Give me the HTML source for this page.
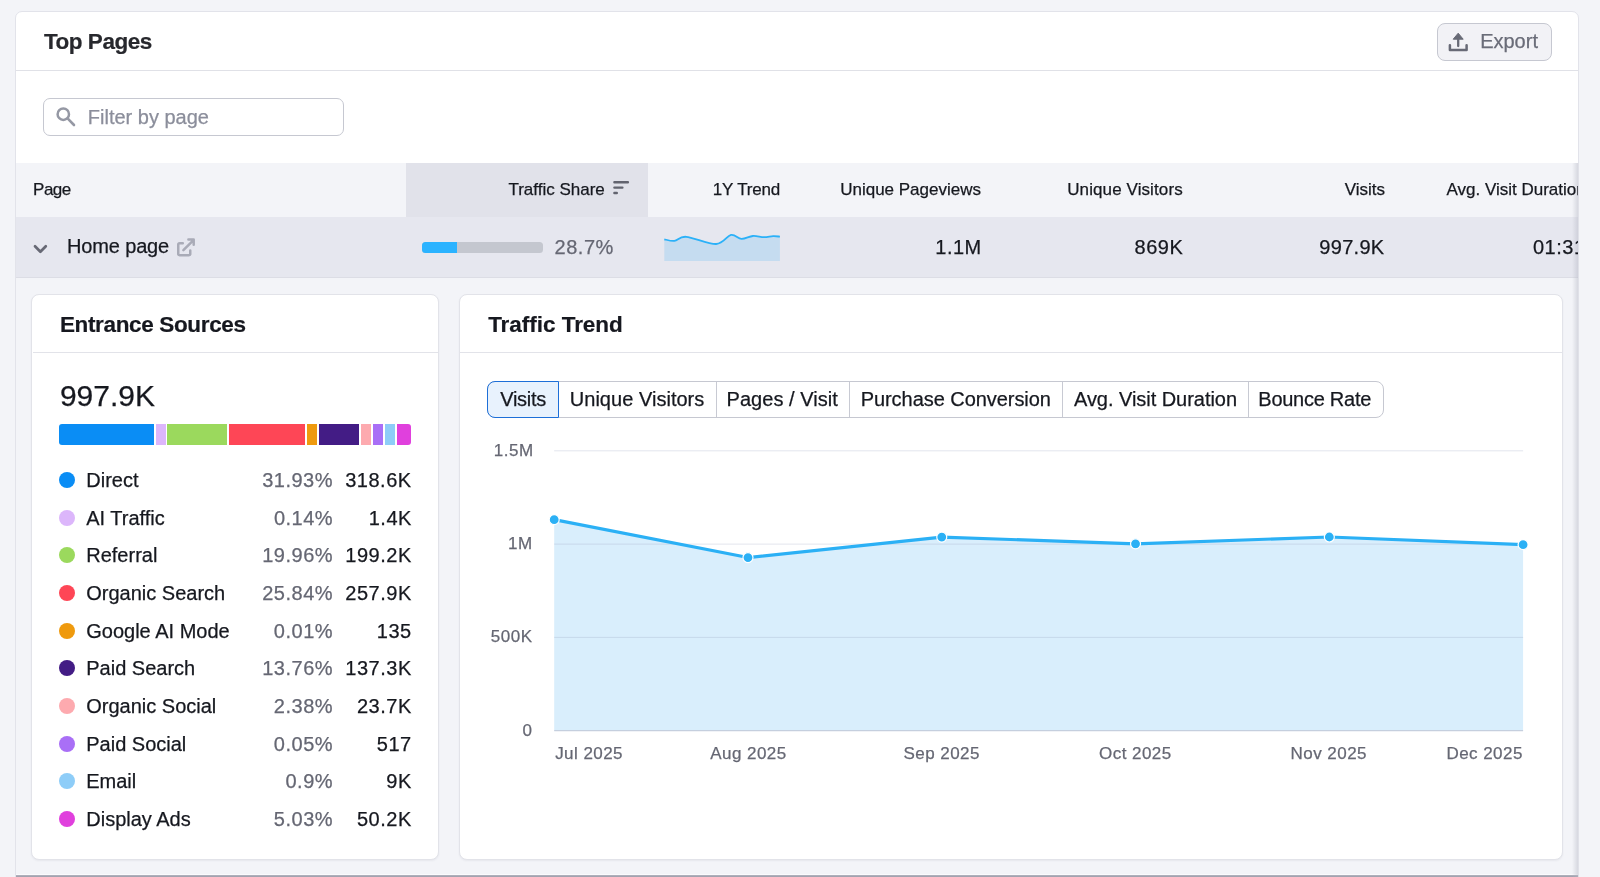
<!DOCTYPE html>
<html><head><meta charset="utf-8"><style>
html,body{margin:0;padding:0}
body{width:1600px;height:877px;overflow:hidden;position:relative;background:#f3f4f8;font-family:"Liberation Sans",sans-serif}
.abs{position:absolute}
</style></head><body>
<!-- outer card -->
<div class="abs" style="left:15px;top:11px;width:1564px;height:900px;box-sizing:border-box;background:#fff;border:1px solid #e2e3ea;border-radius:7px"></div>
<div class="abs" style="left:16px;top:70px;width:1562px;height:1px;background:#e0e1e7"></div>
<!-- export button -->
<div class="abs" style="left:1437px;top:23px;width:114.5px;height:37.5px;box-sizing:border-box;border:1px solid #c6c8d1;border-radius:8px;background:#f2f2f6"></div>
<svg class="abs" style="left:0;top:0" width="1600" height="100">
<path d="M1458.2,33.2 L1463.2,39.2 L1453.2,39.2 Z" fill="#686a76" stroke="#686a76" stroke-width="1" stroke-linejoin="round"/>
<path d="M1458.2,38.5 V46" fill="none" stroke="#686a76" stroke-width="2.3" stroke-linecap="round"/>
<path d="M1449.9,45.3 V50 H1466.6 V45.3" fill="none" stroke="#686a76" stroke-width="2.5" stroke-linecap="round" stroke-linejoin="round"/>
</svg>
<!-- filter input -->
<div class="abs" style="left:43px;top:98px;width:301px;height:38px;box-sizing:border-box;border:1px solid #c6c8d1;border-radius:7px;background:#fff"></div>
<svg class="abs" style="left:0;top:0" width="400" height="200">
<circle cx="63.3" cy="114.2" r="5.7" fill="none" stroke="#9598a4" stroke-width="2.5"/>
<path d="M67.8,118.7 L74,125" stroke="#9598a4" stroke-width="2.6" stroke-linecap="round"/>
</svg>
<!-- table header -->
<div class="abs" style="left:16px;top:163px;width:1562px;height:54px;background:#f3f4f8"></div>
<div class="abs" style="left:406px;top:163px;width:242px;height:54px;background:#e1e2ea"></div>
<svg class="abs" style="left:0;top:0" width="800" height="220">
<path d="M614.4,182.3 H627.9 M614.4,187.6 H622.4 M614.4,193 H616.8" stroke="#62646f" stroke-width="2.4" stroke-linecap="round"/>
</svg>
<!-- data row -->
<div class="abs" style="left:16px;top:217px;width:1562px;height:61px;background:#e6e7ef"></div>
<div class="abs" style="left:16px;top:277px;width:1562px;height:1px;background:#dcdde5"></div>
<svg class="abs" style="left:0;top:0" width="800" height="300">
<path d="M35,246.2 L40.4,251.7 L45.8,246.2" fill="none" stroke="#676975" stroke-width="2.7" stroke-linecap="round" stroke-linejoin="round"/>
<path d="M182.8,243.3 H179.6 Q178.25,243.3 178.25,244.6 V253.9 Q178.25,255.2 179.6,255.2 H188.9 Q190.25,255.2 190.25,253.9 V250.6" fill="none" stroke="#a9abb7" stroke-width="2.5" stroke-linecap="round"/>
<path d="M183.4,250.2 L193,240.6 M188.4,239.5 H193.7 V244.8" fill="none" stroke="#a9abb7" stroke-width="2.5" stroke-linecap="round" stroke-linejoin="round"/>
</svg>
<div class="abs" style="left:422px;top:242px;width:121px;height:11px;border-radius:3.5px;background:#c4c7cf;overflow:hidden"><div style="width:35.3px;height:11px;background:#2bb3ff"></div></div>
<svg style="position:absolute;left:0;top:0" width="1600" height="877">
<path d="M664.30,239.30 C665.98,239.57 670.75,241.32 674.40,240.90 C678.05,240.48 679.23,236.28 686.20,236.80 C693.17,237.32 708.73,244.32 716.20,244.00 C723.67,243.68 726.78,235.75 731.00,234.90 C735.22,234.05 737.85,238.72 741.50,238.90 C745.15,239.08 749.17,236.28 752.90,236.00 C756.63,235.72 760.53,237.17 763.90,237.20 C767.27,237.23 770.43,236.30 773.10,236.20 C775.77,236.10 778.77,236.53 779.90,236.60 L779.9,260.9 L664.3,260.9 Z" fill="#c5dcf0"/>
<path d="M664.30,239.30 C665.98,239.57 670.75,241.32 674.40,240.90 C678.05,240.48 679.23,236.28 686.20,236.80 C693.17,237.32 708.73,244.32 716.20,244.00 C723.67,243.68 726.78,235.75 731.00,234.90 C735.22,234.05 737.85,238.72 741.50,238.90 C745.15,239.08 749.17,236.28 752.90,236.00 C756.63,235.72 760.53,237.17 763.90,237.20 C767.27,237.23 770.43,236.30 773.10,236.20 C775.77,236.10 778.77,236.53 779.90,236.60" fill="none" stroke="#2bb1f8" stroke-width="1.8"/>
</svg>
<!-- expanded area -->
<div class="abs" style="left:16px;top:278px;width:1562px;height:596px;background:#f3f4f8"></div>
<div class="abs" style="left:16px;top:874px;width:1562px;height:1px;background:#fbfbfd"></div>
<div class="abs" style="left:16px;top:875px;width:1562px;height:2px;background:linear-gradient(#b4b5c0,#9c9daa)"></div>
<!-- entrance sources card -->
<div class="abs" style="left:31px;top:294px;width:407.5px;height:565.5px;box-sizing:border-box;background:#fff;border:1px solid #e2e3e9;border-radius:8px;box-shadow:0 1px 2px rgba(30,30,60,0.06)"></div>
<div class="abs" style="left:32.5px;top:352px;width:405px;height:1px;background:#e2e3e9"></div>
<!-- traffic trend card -->
<div class="abs" style="left:459px;top:294px;width:1104px;height:565.5px;box-sizing:border-box;background:#fff;border:1px solid #e2e3e9;border-radius:8px;box-shadow:0 1px 2px rgba(30,30,60,0.06)"></div>
<div class="abs" style="left:460px;top:352px;width:1102px;height:1px;background:#e2e3e9"></div>
<!-- tabs -->
<div class="abs" style="left:486.5px;top:381px;width:897px;height:37px;box-sizing:border-box;border:1px solid #c6c8d1;border-radius:8px;background:#fff"></div>
<div class="abs" style="left:715.5px;top:382px;width:1px;height:35px;background:#c8cad3"></div>
<div class="abs" style="left:849px;top:382px;width:1px;height:35px;background:#c8cad3"></div>
<div class="abs" style="left:1061.5px;top:382px;width:1px;height:35px;background:#c8cad3"></div>
<div class="abs" style="left:1247.5px;top:382px;width:1px;height:35px;background:#c8cad3"></div>
<div class="abs" style="left:486.5px;top:381px;width:72px;height:37px;box-sizing:border-box;border:1.6px solid #1d6fd8;border-radius:8px 0 0 8px;background:#e8f2fd"></div>
<svg style="position:absolute;left:0;top:0" width="1600" height="877" viewBox="0 0 1600 877">
<path d="M554.20,730.70 L554.20,519.66 L747.98,557.54 L941.76,537.10 L1135.54,543.80 L1329.32,537.01 L1523.10,544.66 L1523.10,730.70 Z" fill="#d9eefc"/>
<line x1="554.2" x2="1523.1" y1="637.40" y2="637.40" stroke="rgba(150,160,190,0.28)" stroke-width="1"/><line x1="554.2" x2="1523.1" y1="544.10" y2="544.10" stroke="rgba(150,160,190,0.28)" stroke-width="1"/><line x1="554.2" x2="1523.1" y1="450.80" y2="450.80" stroke="rgba(150,160,190,0.28)" stroke-width="1"/>
<line x1="554.2" x2="1523.1" y1="730.7" y2="730.7" stroke="#c5cfde" stroke-width="1.2"/>
<path d="M554.20,519.66 L747.98,557.54 L941.76,537.10 L1135.54,543.80 L1329.32,537.01 L1523.10,544.66" fill="none" stroke="#2bb0f5" stroke-width="3.2" stroke-linejoin="round"/>
<circle cx="554.20" cy="519.66" r="5" fill="#2bb0f5" stroke="#fff" stroke-width="1.2"/><circle cx="747.98" cy="557.54" r="5" fill="#2bb0f5" stroke="#fff" stroke-width="1.2"/><circle cx="941.76" cy="537.10" r="5" fill="#2bb0f5" stroke="#fff" stroke-width="1.2"/><circle cx="1135.54" cy="543.80" r="5" fill="#2bb0f5" stroke="#fff" stroke-width="1.2"/><circle cx="1329.32" cy="537.01" r="5" fill="#2bb0f5" stroke="#fff" stroke-width="1.2"/><circle cx="1523.10" cy="544.66" r="5" fill="#2bb0f5" stroke="#fff" stroke-width="1.2"/>
</svg>
<div style="position:absolute;left:59.20px;top:424px;width:95.20px;height:21px;background:#0a8df5;border-radius:3px 0 0 3px;"></div><div style="position:absolute;left:156.10px;top:424px;width:9.80px;height:21px;background:#dcb6fb;"></div><div style="position:absolute;left:167.30px;top:424px;width:59.60px;height:21px;background:#9bd95d;"></div><div style="position:absolute;left:228.90px;top:424px;width:75.90px;height:21px;background:#fe4656;"></div><div style="position:absolute;left:306.80px;top:424px;width:10.30px;height:21px;background:#ef9a0e;"></div><div style="position:absolute;left:318.90px;top:424px;width:40.50px;height:21px;background:#431c85;"></div><div style="position:absolute;left:361.10px;top:424px;width:9.80px;height:21px;background:#fdaaaf;"></div><div style="position:absolute;left:372.60px;top:424px;width:10.40px;height:21px;background:#a96ff6;"></div><div style="position:absolute;left:384.70px;top:424px;width:10.30px;height:21px;background:#8ecdf8;"></div><div style="position:absolute;left:396.80px;top:424px;width:14.40px;height:21px;background:#e040dd;border-radius:0 3px 3px 0;"></div>
<div style="position:absolute;left:59px;top:472.00px;width:16px;height:16px;border-radius:50%;background:#0a8df5"></div><div style="position:absolute;left:59px;top:509.67px;width:16px;height:16px;border-radius:50%;background:#dcb6fb"></div><div style="position:absolute;left:59px;top:547.34px;width:16px;height:16px;border-radius:50%;background:#9bd95d"></div><div style="position:absolute;left:59px;top:585.01px;width:16px;height:16px;border-radius:50%;background:#fe4656"></div><div style="position:absolute;left:59px;top:622.68px;width:16px;height:16px;border-radius:50%;background:#ef9a0e"></div><div style="position:absolute;left:59px;top:660.35px;width:16px;height:16px;border-radius:50%;background:#431c85"></div><div style="position:absolute;left:59px;top:698.02px;width:16px;height:16px;border-radius:50%;background:#fdaaaf"></div><div style="position:absolute;left:59px;top:735.69px;width:16px;height:16px;border-radius:50%;background:#a96ff6"></div><div style="position:absolute;left:59px;top:773.36px;width:16px;height:16px;border-radius:50%;background:#8ecdf8"></div><div style="position:absolute;left:59px;top:811.03px;width:16px;height:16px;border-radius:50%;background:#e040dd"></div>
<!-- scroll shadow -->
<div class="abs" style="left:1572px;top:163px;width:6px;height:714px;background:linear-gradient(to right, rgba(180,182,195,0), rgba(180,182,195,0.45))"></div>
<div class="abs" style="left:1578px;top:163px;width:1px;height:714px;background:#e0e1e8"></div>
<div class="abs" style="left:0;top:0;width:1600px;height:877px;will-change:transform"><div id="t_top" style="left:43.90px;-webkit-text-stroke:0.2px currentColor;position:absolute;top:30.55px;font-size:22.5px;line-height:22.5px;font-weight:700;color:#27282d;white-space:nowrap;letter-spacing:-0.46px;">Top Pages</div><div id="t_export" style="left:1480.15px;-webkit-text-stroke:0.25px currentColor;position:absolute;top:31.07px;font-size:20px;line-height:20px;font-weight:400;color:#6a6c78;white-space:nowrap;">Export</div><div id="t_filter" style="left:87.80px;-webkit-text-stroke:0.25px currentColor;position:absolute;top:106.87px;font-size:20px;line-height:20px;font-weight:400;color:#8b8e9b;white-space:nowrap;">Filter by page</div><div id="h_page" style="left:33.05px;-webkit-text-stroke:0.25px currentColor;position:absolute;top:180.61px;font-size:17px;line-height:17px;font-weight:400;color:#16181f;white-space:nowrap;letter-spacing:-0.5px;">Page</div><div id="h_ts" style="right:995.25px;-webkit-text-stroke:0.25px currentColor;position:absolute;top:180.61px;font-size:17px;line-height:17px;font-weight:400;color:#16181f;white-space:nowrap;">Traffic Share</div><div id="h_trend" style="right:819.85px;-webkit-text-stroke:0.25px currentColor;position:absolute;top:180.61px;font-size:17px;line-height:17px;font-weight:400;color:#16181f;white-space:nowrap;letter-spacing:-0.17px;">1Y Trend</div><div id="h_upv" style="right:619.00px;-webkit-text-stroke:0.25px currentColor;position:absolute;top:180.61px;font-size:17px;line-height:17px;font-weight:400;color:#16181f;white-space:nowrap;">Unique Pageviews</div><div id="h_uv" style="right:417.25px;-webkit-text-stroke:0.25px currentColor;position:absolute;top:180.61px;font-size:17px;line-height:17px;font-weight:400;color:#16181f;white-space:nowrap;letter-spacing:0.1px;">Unique Visitors</div><div id="h_visits" style="right:215.00px;-webkit-text-stroke:0.25px currentColor;position:absolute;top:180.61px;font-size:17px;line-height:17px;font-weight:400;color:#16181f;white-space:nowrap;">Visits</div><div id="r_home" style="left:67.00px;-webkit-text-stroke:0.25px currentColor;position:absolute;top:236.07px;font-size:20px;line-height:20px;font-weight:400;color:#16181f;white-space:nowrap;letter-spacing:-0.15px;">Home page</div><div id="r_pct" style="left:554.60px;-webkit-text-stroke:0.25px currentColor;position:absolute;top:236.57px;font-size:20px;line-height:20px;font-weight:400;color:#656773;white-space:nowrap;letter-spacing:0.5px;">28.7%</div><div id="r_upv" style="right:618.25px;-webkit-text-stroke:0.25px currentColor;position:absolute;top:236.57px;font-size:20px;line-height:20px;font-weight:400;color:#16181f;white-space:nowrap;letter-spacing:0.5px;">1.1M</div><div id="r_uv" style="right:416.75px;-webkit-text-stroke:0.25px currentColor;position:absolute;top:236.57px;font-size:20px;line-height:20px;font-weight:400;color:#16181f;white-space:nowrap;letter-spacing:0.5px;">869K</div><div id="r_visits" style="right:215.50px;-webkit-text-stroke:0.25px currentColor;position:absolute;top:236.57px;font-size:20px;line-height:20px;font-weight:400;color:#16181f;white-space:nowrap;letter-spacing:0.3px;">997.9K</div><div id="t_es" style="left:59.90px;-webkit-text-stroke:0.2px currentColor;position:absolute;top:313.55px;font-size:22.5px;line-height:22.5px;font-weight:700;color:#16181f;white-space:nowrap;letter-spacing:-0.35px;">Entrance Sources</div><div id="t_tt" style="left:488.15px;-webkit-text-stroke:0.2px currentColor;position:absolute;top:313.55px;font-size:22.5px;line-height:22.5px;font-weight:700;color:#16181f;white-space:nowrap;letter-spacing:-0.03px;">Traffic Trend</div><div id="big" style="left:59.90px;-webkit-text-stroke:0.25px currentColor;position:absolute;top:381.10px;font-size:30px;line-height:30px;font-weight:400;color:#16181f;white-space:nowrap;">997.9K</div><div id="l_n0" style="left:86.25px;-webkit-text-stroke:0.25px currentColor;position:absolute;top:470.07px;font-size:20px;line-height:20px;font-weight:400;color:#16181f;white-space:nowrap;">Direct</div><div id="l_p0" style="right:1267.00px;-webkit-text-stroke:0.25px currentColor;position:absolute;top:470.07px;font-size:20px;line-height:20px;font-weight:400;color:#656773;white-space:nowrap;letter-spacing:0.5px;">31.93%</div><div id="l_v0" style="right:1188.40px;-webkit-text-stroke:0.25px currentColor;position:absolute;top:470.07px;font-size:20px;line-height:20px;font-weight:400;color:#16181f;white-space:nowrap;letter-spacing:0.5px;">318.6K</div><div id="l_n1" style="left:86.25px;-webkit-text-stroke:0.25px currentColor;position:absolute;top:507.74px;font-size:20px;line-height:20px;font-weight:400;color:#16181f;white-space:nowrap;">AI Traffic</div><div id="l_p1" style="right:1266.88px;-webkit-text-stroke:0.25px currentColor;position:absolute;top:507.74px;font-size:20px;line-height:20px;font-weight:400;color:#656773;white-space:nowrap;letter-spacing:0.5px;">0.14%</div><div id="l_v1" style="right:1188.15px;-webkit-text-stroke:0.25px currentColor;position:absolute;top:507.74px;font-size:20px;line-height:20px;font-weight:400;color:#16181f;white-space:nowrap;letter-spacing:0.5px;">1.4K</div><div id="l_n2" style="left:86.25px;-webkit-text-stroke:0.25px currentColor;position:absolute;top:545.41px;font-size:20px;line-height:20px;font-weight:400;color:#16181f;white-space:nowrap;">Referral</div><div id="l_p2" style="right:1266.94px;-webkit-text-stroke:0.25px currentColor;position:absolute;top:545.41px;font-size:20px;line-height:20px;font-weight:400;color:#656773;white-space:nowrap;letter-spacing:0.5px;">19.96%</div><div id="l_v2" style="right:1188.28px;-webkit-text-stroke:0.25px currentColor;position:absolute;top:545.41px;font-size:20px;line-height:20px;font-weight:400;color:#16181f;white-space:nowrap;letter-spacing:0.5px;">199.2K</div><div id="l_n3" style="left:86.25px;-webkit-text-stroke:0.25px currentColor;position:absolute;top:583.08px;font-size:20px;line-height:20px;font-weight:400;color:#16181f;white-space:nowrap;">Organic Search</div><div id="l_p3" style="right:1266.94px;-webkit-text-stroke:0.25px currentColor;position:absolute;top:583.08px;font-size:20px;line-height:20px;font-weight:400;color:#656773;white-space:nowrap;letter-spacing:0.5px;">25.84%</div><div id="l_v3" style="right:1188.28px;-webkit-text-stroke:0.25px currentColor;position:absolute;top:583.08px;font-size:20px;line-height:20px;font-weight:400;color:#16181f;white-space:nowrap;letter-spacing:0.5px;">257.9K</div><div id="l_n4" style="left:86.25px;-webkit-text-stroke:0.25px currentColor;position:absolute;top:620.75px;font-size:20px;line-height:20px;font-weight:400;color:#16181f;white-space:nowrap;">Google AI Mode</div><div id="l_p4" style="right:1266.94px;-webkit-text-stroke:0.25px currentColor;position:absolute;top:620.75px;font-size:20px;line-height:20px;font-weight:400;color:#656773;white-space:nowrap;letter-spacing:0.5px;">0.01%</div><div id="l_v4" style="right:1188.28px;-webkit-text-stroke:0.25px currentColor;position:absolute;top:620.75px;font-size:20px;line-height:20px;font-weight:400;color:#16181f;white-space:nowrap;letter-spacing:0.5px;">135</div><div id="l_n5" style="left:86.25px;-webkit-text-stroke:0.25px currentColor;position:absolute;top:658.42px;font-size:20px;line-height:20px;font-weight:400;color:#16181f;white-space:nowrap;">Paid Search</div><div id="l_p5" style="right:1266.94px;-webkit-text-stroke:0.25px currentColor;position:absolute;top:658.42px;font-size:20px;line-height:20px;font-weight:400;color:#656773;white-space:nowrap;letter-spacing:0.5px;">13.76%</div><div id="l_v5" style="right:1188.28px;-webkit-text-stroke:0.25px currentColor;position:absolute;top:658.42px;font-size:20px;line-height:20px;font-weight:400;color:#16181f;white-space:nowrap;letter-spacing:0.5px;">137.3K</div><div id="l_n6" style="left:86.25px;-webkit-text-stroke:0.25px currentColor;position:absolute;top:696.09px;font-size:20px;line-height:20px;font-weight:400;color:#16181f;white-space:nowrap;">Organic Social</div><div id="l_p6" style="right:1266.94px;-webkit-text-stroke:0.25px currentColor;position:absolute;top:696.09px;font-size:20px;line-height:20px;font-weight:400;color:#656773;white-space:nowrap;letter-spacing:0.5px;">2.38%</div><div id="l_v6" style="right:1188.28px;-webkit-text-stroke:0.25px currentColor;position:absolute;top:696.09px;font-size:20px;line-height:20px;font-weight:400;color:#16181f;white-space:nowrap;letter-spacing:0.5px;">23.7K</div><div id="l_n7" style="left:86.25px;-webkit-text-stroke:0.25px currentColor;position:absolute;top:733.76px;font-size:20px;line-height:20px;font-weight:400;color:#16181f;white-space:nowrap;">Paid Social</div><div id="l_p7" style="right:1266.94px;-webkit-text-stroke:0.25px currentColor;position:absolute;top:733.76px;font-size:20px;line-height:20px;font-weight:400;color:#656773;white-space:nowrap;letter-spacing:0.5px;">0.05%</div><div id="l_v7" style="right:1188.28px;-webkit-text-stroke:0.25px currentColor;position:absolute;top:733.76px;font-size:20px;line-height:20px;font-weight:400;color:#16181f;white-space:nowrap;letter-spacing:0.5px;">517</div><div id="l_n8" style="left:86.25px;-webkit-text-stroke:0.25px currentColor;position:absolute;top:771.43px;font-size:20px;line-height:20px;font-weight:400;color:#16181f;white-space:nowrap;">Email</div><div id="l_p8" style="right:1266.94px;-webkit-text-stroke:0.25px currentColor;position:absolute;top:771.43px;font-size:20px;line-height:20px;font-weight:400;color:#656773;white-space:nowrap;letter-spacing:0.5px;">0.9%</div><div id="l_v8" style="right:1188.28px;-webkit-text-stroke:0.25px currentColor;position:absolute;top:771.43px;font-size:20px;line-height:20px;font-weight:400;color:#16181f;white-space:nowrap;letter-spacing:0.5px;">9K</div><div id="l_n9" style="left:86.25px;-webkit-text-stroke:0.25px currentColor;position:absolute;top:809.10px;font-size:20px;line-height:20px;font-weight:400;color:#16181f;white-space:nowrap;">Display Ads</div><div id="l_p9" style="right:1266.94px;-webkit-text-stroke:0.25px currentColor;position:absolute;top:809.10px;font-size:20px;line-height:20px;font-weight:400;color:#656773;white-space:nowrap;letter-spacing:0.5px;">5.03%</div><div id="l_v9" style="right:1188.28px;-webkit-text-stroke:0.25px currentColor;position:absolute;top:809.10px;font-size:20px;line-height:20px;font-weight:400;color:#16181f;white-space:nowrap;letter-spacing:0.5px;">50.2K</div><div id="tab0" style="left:500.25px;-webkit-text-stroke:0.25px currentColor;position:absolute;top:388.82px;font-size:20px;line-height:20px;font-weight:400;color:#16181f;white-space:nowrap;letter-spacing:-0.3px;">Visits</div><div id="tab1" style="left:569.75px;-webkit-text-stroke:0.25px currentColor;position:absolute;top:388.82px;font-size:20px;line-height:20px;font-weight:400;color:#16181f;white-space:nowrap;letter-spacing:0.03px;">Unique Visitors</div><div id="tab2" style="left:726.55px;-webkit-text-stroke:0.25px currentColor;position:absolute;top:388.82px;font-size:20px;line-height:20px;font-weight:400;color:#16181f;white-space:nowrap;letter-spacing:0.03px;">Pages / Visit</div><div id="tab3" style="left:860.65px;-webkit-text-stroke:0.25px currentColor;position:absolute;top:388.82px;font-size:20px;line-height:20px;font-weight:400;color:#16181f;white-space:nowrap;letter-spacing:-0.05px;">Purchase Conversion</div><div id="tab4" style="left:1073.95px;-webkit-text-stroke:0.25px currentColor;position:absolute;top:388.82px;font-size:20px;line-height:20px;font-weight:400;color:#16181f;white-space:nowrap;letter-spacing:-0.04px;">Avg. Visit Duration</div><div id="tab5" style="left:1258.30px;-webkit-text-stroke:0.25px currentColor;position:absolute;top:388.82px;font-size:20px;line-height:20px;font-weight:400;color:#16181f;white-space:nowrap;letter-spacing:-0.26px;">Bounce Rate</div><div id="y0" style="right:1067.45px;-webkit-text-stroke:0.25px currentColor;position:absolute;top:721.71px;font-size:17px;line-height:17px;font-weight:400;color:#656773;white-space:nowrap;letter-spacing:0.5px;">0</div><div id="y1" style="right:1067.45px;-webkit-text-stroke:0.25px currentColor;position:absolute;top:628.41px;font-size:17px;line-height:17px;font-weight:400;color:#656773;white-space:nowrap;letter-spacing:0.5px;">500K</div><div id="y2" style="right:1067.45px;-webkit-text-stroke:0.25px currentColor;position:absolute;top:535.11px;font-size:17px;line-height:17px;font-weight:400;color:#656773;white-space:nowrap;letter-spacing:0.5px;">1M</div><div id="y3" style="right:1066.45px;-webkit-text-stroke:0.25px currentColor;position:absolute;top:441.81px;font-size:17px;line-height:17px;font-weight:400;color:#656773;white-space:nowrap;letter-spacing:0.5px;">1.5M</div><div id="x0" style="left:555.15px;-webkit-text-stroke:0.25px currentColor;position:absolute;top:744.51px;font-size:17px;line-height:17px;font-weight:400;color:#656773;white-space:nowrap;letter-spacing:0.45px;">Jul 2025</div><div id="x1" style="left:548.45px;width:400px;text-align:center;-webkit-text-stroke:0.25px currentColor;position:absolute;top:744.51px;font-size:17px;line-height:17px;font-weight:400;color:#656773;white-space:nowrap;letter-spacing:0.45px;">Aug 2025</div><div id="x2" style="left:741.70px;width:400px;text-align:center;-webkit-text-stroke:0.25px currentColor;position:absolute;top:744.51px;font-size:17px;line-height:17px;font-weight:400;color:#656773;white-space:nowrap;letter-spacing:0.45px;">Sep 2025</div><div id="x3" style="left:935.40px;width:400px;text-align:center;-webkit-text-stroke:0.25px currentColor;position:absolute;top:744.51px;font-size:17px;line-height:17px;font-weight:400;color:#656773;white-space:nowrap;letter-spacing:0.45px;">Oct 2025</div><div id="x4" style="left:1128.80px;width:400px;text-align:center;-webkit-text-stroke:0.25px currentColor;position:absolute;top:744.51px;font-size:17px;line-height:17px;font-weight:400;color:#656773;white-space:nowrap;letter-spacing:0.45px;">Nov 2025</div><div id="x5" style="right:77.20px;-webkit-text-stroke:0.25px currentColor;position:absolute;top:744.51px;font-size:17px;line-height:17px;font-weight:400;color:#656773;white-space:nowrap;letter-spacing:0.45px;">Dec 2025</div></div>
<div id="h_avg" class="abs" style="left:0;top:0;width:1578px;height:877px;overflow:hidden;pointer-events:none;will-change:transform">
<div style="position:absolute;left:1446.5px;top:180.61px;font-size:17px;line-height:17px;color:#16181f;white-space:nowrap;-webkit-text-stroke:0.25px currentColor">Avg. Visit Duration</div>
<div style="position:absolute;left:1533px;top:236.57px;font-size:20px;line-height:20px;color:#16181f;white-space:nowrap;letter-spacing:0.5px;-webkit-text-stroke:0.25px currentColor">01:31</div>
</div>
</body></html>
